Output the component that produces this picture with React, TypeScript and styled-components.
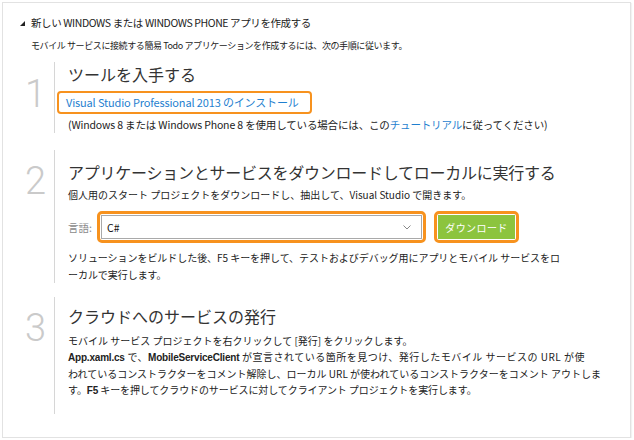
import React from 'react';
import styled, { createGlobalStyle } from 'styled-components';

const Global = createGlobalStyle`
  html, body { margin: 0; padding: 0; background: #ffffff; }
  body {
    font-family: "Noto Sans CJK JP", "Liberation Sans", sans-serif;
    color: #222222;
  }
`;

const Frame = styled.div`
  box-sizing: border-box;
  margin: 2px 0 0 2px;
  width: 629px;
  height: 436px;
  border: 1px solid #e2e2e2;
  box-shadow: 1px 1px 1px rgba(0, 0, 0, 0.05);
  padding: 12px 0 0 17px;
`;

const TitleRow = styled.div`
  display: flex;
  align-items: center;
  gap: 6px;
  height: 16px;
`;

const Title = styled.h1`
  margin: 0;
  font-size: 10.5px;
  letter-spacing: -0.4px;
  font-weight: 400;
  line-height: 16px;
  color: #222;
  white-space: nowrap;
`;

const Intro = styled.p`
  margin: 8px 0 0 11px;
  font-size: 9px;
  letter-spacing: -0.4px;
  line-height: 14px;
  white-space: nowrap;
`;

const Steps = styled.div`
  margin-top: 9px;
  display: flex;
  flex-direction: column;
`;

const Step = styled.section<{ $gap: number }>`
  display: flex;
  margin-top: ${(p) => p.$gap}px;
`;

const Num = styled.div<{ $top: number }>`
  flex: none;
  width: 26px;
  padding-top: ${(p) => p.$top}px;
  text-align: right;
  font-family: "Roboto", "Lato", sans-serif;
  font-weight: 300;
  font-size: 38px;
  line-height: 38px;
  color: #cacaca;
`;

const StepBody = styled.div<{ $top: number; $bottom: number }>`
  flex: 1;
  margin-left: 8px;
  border-left: 1px solid #d6d6d6;
  padding: ${(p) => p.$top}px 0 ${(p) => p.$bottom}px 13px;
`;

const Heading = styled.h2<{ $ls?: number }>`
  margin: 0;
  font-size: 16px;
  font-weight: 400;
  letter-spacing: ${(p) => p.$ls ?? 0}px;
  line-height: 22px;
  color: #333;
  white-space: nowrap;
`;

const Text = styled.p<{ $top: number; $size: number; $lh: number; $ls?: number }>`
  margin: ${(p) => p.$top}px 0 0;
  font-size: ${(p) => p.$size}px;
  line-height: ${(p) => p.$lh}px;
  letter-spacing: ${(p) => p.$ls ?? 0}px;
  white-space: nowrap;
  color: #222;
`;

const Line = styled.span<{ $ls: number }>`
  letter-spacing: ${(p) => p.$ls}px;
`;

const Link = styled.a`
  color: #1f7fcf;
  text-decoration: none;
`;

const LinkBox = styled.a`
  display: block;
  width: fit-content;
  margin: 6px 0 0 -11px;
  border: 2px solid #f7921e;
  border-radius: 4px;
  padding: 1px 11px 1px 7px;
  font-size: 11px;
  letter-spacing: -0.15px;
  line-height: 17px;
  color: #1f7fcf;
  text-decoration: none;
  white-space: nowrap;
`;

const Field = styled.div`
  display: flex;
  align-items: center;
  margin-top: 8px;
`;

const Label = styled.span`
  flex: none;
  width: 29px;
  font-size: 10.5px;
  color: #8a8a8a;
`;

const Highlight = styled.div<{ $gap: number }>`
  margin-left: ${(p) => p.$gap}px;
  border: 3px solid #f7921e;
  border-radius: 5px;
  padding: 1px;
  display: flex;
`;

const Select = styled.div`
  box-sizing: border-box;
  width: 321px;
  height: 24px;
  border: 1px solid #a9a9a9;
  display: flex;
  align-items: center;
  justify-content: space-between;
  padding: 0 10px 0 5px;
  font-size: 10.5px;
  color: #111;
  background: #fff;
`;

const Button = styled.button`
  box-sizing: border-box;
  width: 77px;
  height: 24px;
  border: none;
  background: #8cc43e;
  color: #ffffff;
  font-family: "Noto Sans CJK JP", sans-serif;
  font-size: 10px;
  letter-spacing: 0.4px;
  padding: 0;
  cursor: pointer;
`;

const Bold = styled.b`
  font-family: "Liberation Sans", "Noto Sans CJK JP", sans-serif;
  font-weight: 700;
  letter-spacing: -0.2px;
`;

const Triangle = () => (
  <svg width="5" height="5" viewBox="0 0 5 5">
    <polygon points="5,0 5,5 0,5" fill="#222" />
  </svg>
);

const Chevron = () => (
  <svg width="8" height="5" viewBox="0 0 8 5">
    <polyline points="0.5,0.5 4,4 7.5,0.5" fill="none" stroke="#888" strokeWidth="1" />
  </svg>
);

export default function App() {
  return (
    <>
      <Global />
      <Frame>
        <TitleRow>
          <Triangle />
          <Title>新しい WINDOWS または WINDOWS PHONE アプリを作成する</Title>
        </TitleRow>
        <Intro>モバイル サービスに接続する簡易 Todo アプリケーションを作成するには、次の手順に従います。</Intro>
        <Steps>
          <Step $gap={0}>
            <Num $top={13}>1</Num>
            <StepBody $top={1} $bottom={0}>
              <Heading>ツールを入手する</Heading>
              <LinkBox href="#">Visual Studio Professional 2013 のインストール</LinkBox>
              <Text $top={3} $size={10.5} $lh={16} $ls={-0.15}>
                (Windows 8 または Windows Phone 8 を使用している場合には、この<Link href="#">チュートリアル</Link>に従ってください)
              </Text>
            </StepBody>
          </Step>
          <Step $gap={17}>
            <Num $top={12}>2</Num>
            <StepBody $top={11} $bottom={0}>
              <Heading $ls={-0.25}>アプリケーションとサービスをダウンロードしてローカルに実行する</Heading>
              <Text $top={4} $size={10} $lh={16}>
                個人用のスタート プロジェクトをダウンロードし、抽出して、Visual Studio で開きます。
              </Text>
              <Field>
                <Label>言語:</Label>
                <Highlight $gap={0}>
                  <Select>
                    <span>C#</span>
                    <Chevron />
                  </Select>
                </Highlight>
                <Highlight $gap={8}>
                  <Button>ダウンロード</Button>
                </Highlight>
              </Field>
              <Text $top={6} $size={10} $lh={17} $ls={-0.05}>
                ソリューションをビルドした後、F5 キーを押して、テストおよびデバッグ用にアプリとモバイル サービスをロ
                <br />
                ーカルで実行します。
              </Text>
            </StepBody>
          </Step>
          <Step $gap={14}>
            <Num $top={12}>3</Num>
            <StepBody $top={8} $bottom={15}>
              <Heading>クラウドへのサービスの発行</Heading>
              <Text $top={6} $size={10} $lh={16}>
                <Line $ls={0}>モバイル サービス プロジェクトを右クリックして [発行] をクリックします。</Line>
                <br />
                <Line $ls={0.5}>
                  <Bold>App.xaml.cs</Bold> で、<Bold>MobileServiceClient</Bold> が宣言されている箇所を見つけ、発行したモバイル サービスの URL が使
                </Line>
                <br />
                <Line $ls={0}>
                  われているコンストラクターをコメント解除し、ローカル URL が使われているコンストラクターをコメント アウトしま
                </Line>
                <br />
                <Line $ls={-0.1}>
                  す。<Bold>F5</Bold> キーを押してクラウドのサービスに対してクライアント プロジェクトを実行します。
                </Line>
              </Text>
            </StepBody>
          </Step>
        </Steps>
      </Frame>
    </>
  );
}
